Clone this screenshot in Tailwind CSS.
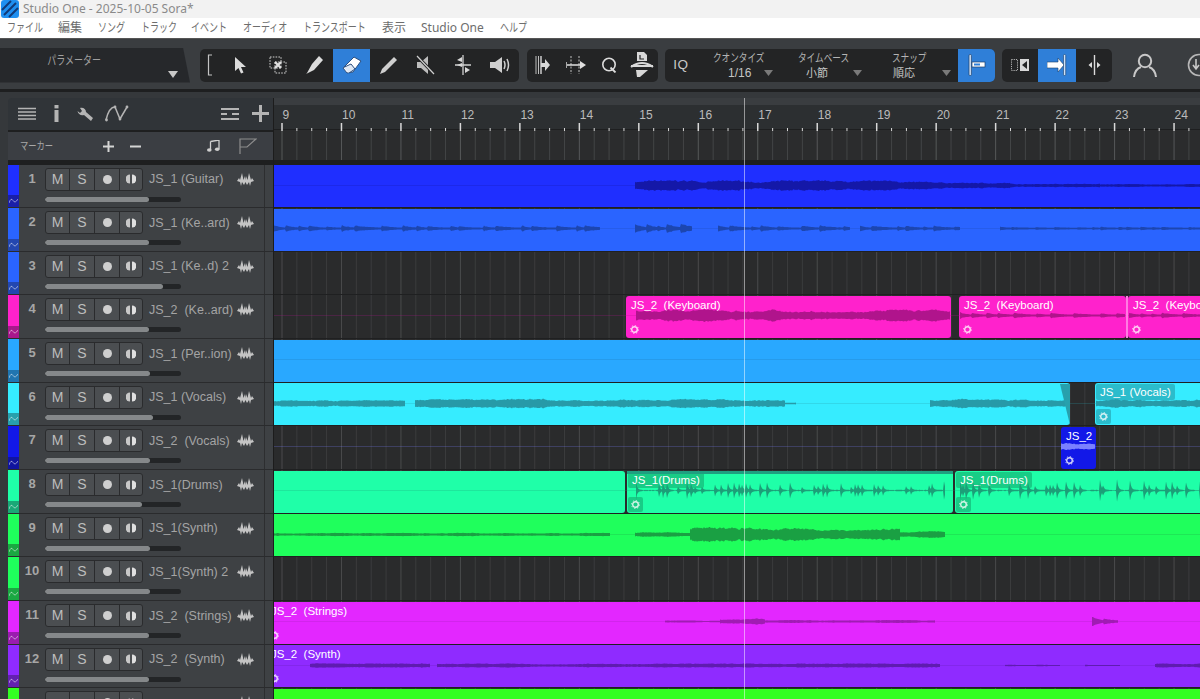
<!DOCTYPE html>
<html lang="ja">
<head>
<meta charset="UTF-8">
<title>Studio One - 2025-10-05 Sora*</title>
<script src="https://cdn.jsdelivr.net/npm/@tailwindcss/browser@4"></script>
</head>
<body class="w-[1200px] h-[699px] overflow-hidden bg-[#35383b] font-['Liberation_Sans','Noto_Sans_CJK_JP',sans-serif]">

<!-- title bar -->
<div class="h-[18px] bg-[#f2f2f2] flex items-center">
  <svg class="w-[18px] h-[18px] ml-[1px]" viewBox="0 0 18 18"><rect width="18" height="18" rx="3" fill="#1f8ff0"/><path d="M1 10L10 1M3 15L15 3M8 17L17 8" stroke="#123a78" stroke-width="2" fill="none"/></svg>
  <span class="ml-[4px] text-[12px] text-[#8a8a8a] font-['Noto_Sans',sans-serif] whitespace-nowrap">Studio One - 2025-10-05 Sora*</span>
</div>

<!-- menu -->
<div class="h-[21px] bg-white flex items-center pl-[7px] text-[12px] text-[#6d6d6d] font-['Noto_Sans','Noto_Sans_CJK_JP',sans-serif] whitespace-nowrap border-b border-[#555]">
  <span class="w-[51px]"><span class="block origin-left scale-x-75">ファイル</span></span>
  <span class="w-[40px]">編集</span>
  <span class="w-[43px]"><span class="block origin-left scale-x-75">ソング</span></span>
  <span class="w-[50px]"><span class="block origin-left scale-x-75">トラック</span></span>
  <span class="w-[52px]"><span class="block origin-left scale-x-75">イベント</span></span>
  <span class="w-[60px]"><span class="block origin-left scale-x-75">オーディオ</span></span>
  <span class="w-[79px]"><span class="block origin-left scale-x-75">トランスポート</span></span>
  <span class="w-[39px]">表示</span>
  <span class="w-[79px]">Studio One</span>
  <span class="w-[40px]"><span class="block origin-left scale-x-75">ヘルプ</span></span>
</div>

<!-- toolbar -->
<div class="h-[50px] bg-[#3a3d40] flex items-center pt-[2px] text-[#b4b4b4] whitespace-nowrap overflow-hidden">
  <div class="relative shrink-0 w-[190px] h-[35px] bg-[#26282b] [clip-path:polygon(0_0,183px_0,190px_100%,0_100%)]">
    <span class="block pl-[47px] pt-[4px] text-[12px] origin-left scale-x-75 text-[#a0a0a0] ml-[12px]">パラメーター</span>
    <svg class="absolute left-[168px] top-[23px] w-[10px] h-[7px]" viewBox="0 0 10 7"><path d="M0 0H10L5 7Z" fill="#c8c8c8"/></svg>
  </div>

  <div class="ml-[10px] shrink-0 w-[319px] h-[33px] bg-[#232425] rounded-[5px] flex">
    <div class="w-[22px] flex items-center pl-[7px]"><svg width="6" height="22" viewBox="0 0 6 22"><path d="M5 1H1.5V21H5" stroke="#c4c4c4" stroke-width="1.2" fill="none"/></svg></div>
    <div class="w-[37px] flex items-center justify-center"><svg width="13" height="17" viewBox="0 0 13 17"><path d="M1 0V14L4.5 11L7 16.5L9.5 15.5L7 10H12Z" fill="#dcdcdc"/></svg></div>
    <div class="w-[37px] flex items-center justify-center"><svg width="18" height="18" viewBox="0 0 18 18"><path d="M1 1H12V12H1ZM6 6H17V17H6Z" fill="none" stroke="#d0d0d0" stroke-dasharray="1.6 1.2"/><path d="M6 6L12 12M12 6L6 12" stroke="#e0e0e0" stroke-width="2.4"/></svg></div>
    <div class="w-[37px] flex items-center justify-center"><svg width="17" height="18" viewBox="0 0 17 18"><path d="M13 0L17 4L8 14L0 18L1 17L6 8Z" fill="#dcdcdc"/></svg></div>
    <div class="w-[37px] flex items-center justify-center bg-[#2f7fd8]"><svg width="20" height="18" viewBox="0 0 20 18"><path d="M12 1L19 5L11 16L5 17L1 12Z" fill="#fff" stroke="#2b4f80"/><path d="M1.5 11.5L9 8L13 13L7 17" fill="#dfe8f4" stroke="#2b4f80"/></svg></div>
    <div class="w-[37px] flex items-center justify-center"><svg width="18" height="18" viewBox="0 0 18 18"><path d="M14 1L17 4L5 16L0 18L2 13Z" fill="#cfcfcf"/></svg></div>
    <div class="w-[37px] flex items-center justify-center"><svg width="19" height="20" viewBox="0 0 19 20"><path d="M1 7H5L12 1V19L5 13H1Z" fill="#bdbdbd"/><path d="M1 1L18 19" stroke="#232425" stroke-width="3"/><path d="M1 1L18 19" stroke="#d0d0d0" stroke-width="1.2"/></svg></div>
    <div class="w-[37px] flex items-center justify-center"><svg width="18" height="20" viewBox="0 0 18 20"><path d="M9 0V20M1 10H17" stroke="#d0d0d0" stroke-width="1.3"/><path d="M8 2L3 5L8 7ZM8 8L3 10L8 12Z" fill="#d8d8d8"/><path d="M11 12V18L16 15Z" fill="#d8d8d8"/></svg></div>
    <div class="w-[37px] flex items-center justify-center"><svg width="20" height="18" viewBox="0 0 20 18"><path d="M0 6H5L12 1V17L5 12H0Z" fill="#d0d0d0"/><path d="M14 5Q16 9 14 13M17 3Q20 9 17 15" stroke="#d0d0d0" stroke-width="1.5" fill="none"/></svg></div>
  </div>

  <div class="ml-[8px] shrink-0 w-[131px] h-[33px] bg-[#232425] rounded-[5px] flex">
    <div class="w-[33px] flex items-center justify-center"><svg width="16" height="20" viewBox="0 0 16 20"><path d="M1 1V19M3.5 1V19" stroke="#bdbdbd"/><path d="M6 1V19" stroke="#d8d8d8" stroke-width="1.4"/><path d="M6 8H10V4L15 10L10 16V12H6Z" fill="#d8d8d8"/></svg></div>
    <div class="w-[33px] flex items-center justify-center"><svg width="20" height="18" viewBox="0 0 20 18"><path d="M5 0V18M13 0V18" stroke="#c0c0c0" stroke-dasharray="2 1.5"/><path d="M0 6V12M1 9H17" stroke="#e0e0e0" stroke-width="1.4"/><path d="M14 5L20 9L14 13Z" fill="#e0e0e0"/></svg></div>
    <div class="w-[33px] flex items-center justify-center"><svg width="16" height="16" viewBox="0 0 16 16"><circle cx="8" cy="7.5" r="6.2" stroke="#dcdcdc" stroke-width="1.6" fill="none"/><path d="M9.5 10.5L14.5 15.5" stroke="#dcdcdc" stroke-width="1.8"/></svg></div>
    <div class="w-[33px] flex items-center justify-center"><svg width="24" height="26" viewBox="0 0 24 26"><path d="M7 0H14L17 3V9H7Z" fill="#d8d8d8"/><path d="M10 3V7H14" stroke="#232425" stroke-width="1.2" fill="none"/><path d="M1 15Q12 7 23 15" stroke="#d8d8d8" stroke-width="2" fill="none"/><path d="M1 13H23V15H1Z" fill="#d8d8d8"/><path d="M6 18H18L10 25H7Z" fill="#d8d8d8"/></svg></div>
  </div>

  <div class="ml-[7px] shrink-0 w-[330px] h-[33px] bg-[#232425] rounded-[5px] flex">
    <div class="w-[32px] flex items-center justify-center text-[13.5px] tracking-[0.5px] text-[#c8c8c8]">IQ</div>
    <div class="w-[85px] pt-[2px] text-[11.5px] leading-[15px]">
      <div class="ml-[16px] origin-left scale-x-75">クオンタイズ</div>
      <div class="flex items-center ml-[31px] text-[#c4c4c4] text-[12px]">1/16<svg class="ml-[13px]" width="9" height="6" viewBox="0 0 9 6"><path d="M0 0H9L4.5 6Z" fill="#7a7a7a"/></svg></div>
    </div>
    <div class="w-[90px] pt-[2px] text-[11.5px] leading-[15px]">
      <div class="ml-[16px] origin-left scale-x-75">タイムベース</div>
      <div class="flex items-center ml-[24px] text-[#c4c4c4] text-[11px]">小節<svg class="ml-[25px]" width="9" height="6" viewBox="0 0 9 6"><path d="M0 0H9L4.5 6Z" fill="#7a7a7a"/></svg></div>
    </div>
    <div class="w-[86px] pt-[2px] text-[11.5px] leading-[15px]">
      <div class="ml-[20px] origin-left scale-x-75">スナップ</div>
      <div class="flex items-center ml-[21px] text-[#c4c4c4] text-[11px]">順応<svg class="ml-[27px]" width="9" height="6" viewBox="0 0 9 6"><path d="M0 0H9L4.5 6Z" fill="#7a7a7a"/></svg></div>
    </div>
    <div class="w-[37px] flex items-center justify-center bg-[#2f7fd8] rounded-r-[5px]"><svg width="18" height="22" viewBox="0 0 18 22"><rect x="1" y="0.5" width="2.4" height="21" rx="1" fill="#cfe2f7" stroke="#1d3f6a" stroke-width="0.7"/><rect x="4" y="8" width="13" height="5" fill="#fff" stroke="#1d3f6a" stroke-width="0.7"/><rect x="6" y="9.5" width="6" height="2" fill="#2f7fd8"/></svg></div>
  </div>

  <div class="ml-[7px] shrink-0 w-[110px] h-[33px] bg-[#232425] rounded-[5px] flex">
    <div class="w-[36px] flex items-center justify-center"><svg width="18" height="12" viewBox="0 0 18 12"><rect x="0.5" y="0.5" width="6" height="11" fill="none" stroke="#b0b0b0" stroke-dasharray="1.2 1"/><rect x="9" y="0" width="9" height="12" fill="#d8d8d8"/><path d="M16 2V10L11 6Z" fill="#232425"/></svg></div>
    <div class="w-[38px] flex items-center justify-center bg-[#2f7fd8]"><svg width="20" height="22" viewBox="0 0 20 22"><path d="M0 8H11V4L17 11L11 18V14H0Z" fill="#fff" stroke="#1d3f6a" stroke-width="0.6"/><rect x="16.5" y="0.5" width="2.2" height="21" rx="1" fill="#cfe2f7" stroke="#1d3f6a" stroke-width="0.6"/></svg></div>
    <div class="w-[36px] flex items-center justify-center"><svg width="13" height="20" viewBox="0 0 13 20"><path d="M6.5 0V20" stroke="#dcdcdc" stroke-width="1.4"/><path d="M4 7V13L0.5 10ZM9 7V13L12.5 10Z" fill="#dcdcdc"/></svg></div>
  </div>

  <svg class="ml-[21px] shrink-0" width="24" height="24" viewBox="0 0 24 24"><circle cx="12" cy="8" r="6.2" stroke="#c8c8c8" stroke-width="2" fill="none"/><path d="M1 24Q2 16 8 14M23 24Q22 16 16 14" stroke="#c8c8c8" stroke-width="2" fill="none"/></svg>
  <svg class="ml-[30px] shrink-0" width="24" height="24" viewBox="0 0 24 24"><circle cx="12" cy="12" r="10.5" stroke="#b8b8b8" stroke-width="1.6" fill="none"/><path d="M9 6V15M6 12L9 16L12 12M15 8V17" stroke="#c8c8c8" stroke-width="1.6" fill="none"/></svg>
</div>

<!-- gap under the toolbar -->
<div class="h-[3px] bg-[#1e1f20]"></div>
<div class="h-[5.5px] bg-[#35383b]"></div>

<!-- main -->
<div class="flex h-[601.5px]">
  <div class="w-[8px] shrink-0"></div>

  <!-- track column -->
  <div class="w-[266px] shrink-0 border-r border-[#1c1c1c]">
    <div class="h-[34.5px] bg-[#303438] border-b-2 border-[#1e1f20] rounded-tl-[4px] flex items-center pl-[10px]">
      <svg width="18" height="14" viewBox="0 0 18 14"><path d="M0 1.5H18M0 5H18M0 8.5H18M0 12H18" stroke="#b4b4b4" stroke-width="1.6"/></svg>
      <svg class="ml-[18px]" width="5" height="17" viewBox="0 0 5 17"><rect x="0.5" y="0" width="4" height="3.4" fill="#b4b4b4"/><rect x="0.5" y="5" width="4" height="12" fill="#b4b4b4"/></svg>
      <svg class="ml-[18px]" width="17" height="14" viewBox="0 0 17 14"><path d="M0.5 4L3 6L5 4L3 1C6 0 9 2 9 5L16 11L14 14L7 8C4 9 1 7 0.5 4Z" fill="#b4b4b4"/></svg>
      <svg class="ml-[11px]" width="24" height="17" viewBox="0 0 24 17"><path d="M1 15Q4 2 10 2L15 14L22 2" stroke="#b4b4b4" stroke-width="1.5" fill="none"/><circle cx="1.5" cy="15" r="1.4" fill="#b4b4b4"/><circle cx="10" cy="2" r="1.4" fill="#b4b4b4"/><circle cx="15" cy="14" r="1.4" fill="#b4b4b4"/><circle cx="22" cy="2" r="1.4" fill="#b4b4b4"/></svg>
      <svg class="ml-[92px]" width="18" height="14" viewBox="0 0 18 14"><path d="M0 2H18M0 7H6M11 7H18M0 12H18" stroke="#b4b4b4" stroke-width="2.2"/></svg>
      <svg class="ml-[13px]" width="17" height="17" viewBox="0 0 17 17"><path d="M8.5 0V17M0 8.5H17" stroke="#b4b4b4" stroke-width="3"/></svg>
    </div>
    <div class="h-[29px] bg-[#3b3e43] border-b border-[#1e1f20] flex items-center pl-[12px] text-[11px] text-[#a8a8a8]">
      <span class="w-[83px] shrink-0 origin-left scale-x-75">マーカー</span>
      <svg class="shrink-0" width="11" height="11" viewBox="0 0 11 11"><path d="M5.5 0V11M0 5.5H11" stroke="#d4d4d4" stroke-width="2"/></svg>
      <svg class="ml-[15.5px] shrink-0" width="11" height="3" viewBox="0 0 11 3"><path d="M0 1.5H11" stroke="#d4d4d4" stroke-width="2"/></svg>
      <svg class="ml-[66px] shrink-0" width="13" height="12" viewBox="0 0 13 12"><path d="M3.5 1.5L12 0V9M3.5 1.5V10" stroke="#cfcfcf" stroke-width="1.3" fill="none"/><ellipse cx="2.3" cy="10" rx="2.3" ry="1.8" fill="#cfcfcf"/><ellipse cx="10.2" cy="9.3" rx="2.3" ry="1.8" fill="#cfcfcf"/></svg>
      <svg class="ml-[19.5px] shrink-0" width="18" height="16" viewBox="0 0 18 16"><path d="M1 16V1H17L8 9H1" stroke="#8d8d8d" stroke-width="1.2" fill="none"/></svg>
    </div>
    <div class="h-[3.5px] bg-[#1e1f20]"></div>
    <div id="tracks"></div>
  </div>

  <!-- arrange view -->
  <div class="relative flex-1 overflow-hidden">
    <div class="h-[7.5px] bg-[#3a3d40]"></div>
    <div id="ruler" class="relative h-[25px] bg-[#2c2f31] border-b border-[#1e1f20]"></div>
    <div class="h-[31px] bg-[#2b2c2d] border-b border-[#1e1f20]"></div>
    <div class="h-[3.5px] bg-[#1e1f20]"></div>
    <svg id="grid" class="absolute left-0 top-[67px] w-[926px] h-[569px]"></svg>
    <div id="lanes" class="relative"></div>
    <div class="absolute left-[470px] top-0 bottom-0 w-px bg-white/50"></div>
  </div>
</div>

<script>
  // track list: name, strip colour, darker strip square, fader end
  const tracks = [
    ["JS_1 (Guitar)", "#1f2fff", "#1a1fa8", 149],
    ["JS_1 (Ke..ard)", "#2a64ff", "#2347b0", 149],
    ["JS_1 (Ke..d) 2", "#2a64ff", "#2347b0", 163],
    ["JS_2  (Ke..ard)", "#ff22cc", "#a8188c", 149],
    ["JS_1 (Per..ion)", "#29a8ff", "#2075b0", 150],
    ["JS_1 (Vocals)", "#36ecff", "#27a0ad", 153],
    ["JS_2  (Vocals)", "#1218e8", "#1014a0", 150],
    ["JS_1(Drums)", "#1fffa8", "#1aa877", 142],
    ["JS_1(Synth)", "#1fff5c", "#1aa842", 150],
    ["JS_1(Synth) 2", "#1fff5c", "#1aa842", 150],
    ["JS_2  (Strings)", "#e327ff", "#9a1cae", 149],
    ["JS_2  (Synth)", "#8f2bff", "#6320b0", 149],
    ["", "#33ff22", "#24a81a", 149]
  ];

  document.getElementById("tracks").innerHTML = tracks.map((t, i) => `
    <div class="relative flex h-[43.67px] bg-[#3e4144] border-b border-[#2a2b2d]">
      <div class="w-[11px] shrink-0 flex flex-col" style="background:${t[1]}">
        <div class="mt-auto h-[12px] flex items-center justify-center" style="background:${t[2]}"><svg width="9" height="6" viewBox="0 0 9 6"><path d="M0 5Q2 -1 4 2.5T9 1" stroke="#ffffff80" fill="none"/></svg></div>
      </div>
      <div class="w-[26px] shrink-0 pt-[6px] text-center text-[13px] leading-[16px] font-bold text-[#a6a6a6]">${i < 12 ? i + 1 : ""}</div>
      <div class="w-[219px] shrink-0 pt-[3px]">
        <div class="flex items-center">
          <div class="w-[98px] h-[23px] flex bg-[#4b4e51] border border-[#2a2b2d] rounded-[3px] text-[#bdbdbd] text-[14px] leading-[20px]">
            <div class="w-[24px] text-center border-r border-[#2a2b2d]">${i < 12 ? "M" : ""}</div>
            <div class="w-[25px] text-center border-r border-[#2a2b2d]">${i < 12 ? "S" : ""}</div>
            <div class="w-[25px] flex items-center justify-center border-r border-[#2a2b2d]"><div class="w-[9px] h-[9px] rounded-full bg-[#cfcfcf]"></div></div>
            <div class="flex-1 flex items-center justify-center"><svg width="10" height="10" viewBox="0 0 10 10"><path d="M4 0.5A4.5 4.5 0 0 0 4 9.5Z" fill="#c8c8c8"/><path d="M6 0.5A4.5 4.5 0 0 1 6 9.5Z" fill="#e0e0e0"/></svg></div>
          </div>
          <div class="ml-[6px] mt-[1px] w-[88px] text-[12.5px] text-[#a4a4a4] whitespace-pre">${t[0]}</div>
          <svg width="17" height="13" viewBox="0 0 17 13"><path d="M0 8L2 5L3 7L5 0L6.5 7L8 3L8.5 7L9 3L10.5 7L12 0L14 7L15 5L17 8L14 9L13 13L12 9L10 12L8.5 9L7 12L5 9L4 13L3 9Z" fill="#c4c4c4"/></svg>
        </div>
        <div class="mt-[6px] w-[136px] h-[5px] rounded-full bg-[#232527] overflow-hidden">
          <div class="h-full rounded-full bg-[#85888a]" style="width:${t[3] - 45}px"></div>
        </div>
      </div>
      <div class="w-px shrink-0 bg-[#2d2e30]"></div>
    </div>`).join("");

  // ruler and grid use the bar pitch of the timeline
  const barPitch = 59.47, firstBar = 8;
  let rulerHtml = "", gridSvg = "", tickSvg = "";
  for (let b = 0; b < 16; b++) {
    const bx = firstBar + b * barPitch;
    rulerHtml += `<span class="absolute top-[1px] text-[12px] text-[#bcbcbc]" style="left:${bx + 0.5}px">${b + 9}</span>`;
    for (let s = 0; s < 4; s++) {
      const x = bx + s * barPitch / 4;
      tickSvg += `<path d="M${x} ${s ? 23 : 18}V26" stroke="#d8d8d8" stroke-width="${s ? 1 : 1.5}"/>`;
      tickSvg += `<path d="M${x} 26V55" stroke="${s ? "#434546" : "#565859"}"/>`;
      gridSvg += `<path d="M${x} 0V569" stroke="${s ? "#3b3c3d" : "#4a4b4c"}"/>`;
    }
  }
  document.getElementById("ruler").innerHTML = rulerHtml + `<svg class="absolute left-0 top-0 w-[926px] h-[56px]">${tickSvg}</svg>`;
  document.getElementById("grid").innerHTML = `<rect width="926" height="569" fill="#2a2b2c"/>` + gridSvg;

  // seeded noise so every render draws the same waveforms
  let seed = 7;
  const rnd = () => (seed = (seed * 16807) % 2147483647) / 2147483647;

  function wave(x1, x2, amp, mode) {
    const top = [], bottom = [];
    let slow = 0.6, beat = x1, beatAmp = 1, lump = x1, lumpLen = 12, lumpAmp = 1;
    for (let x = x1; x <= x2; x++) {
      slow += (rnd() - 0.5) * 0.28;
      slow = Math.min(1, Math.max(0.25, slow));
      let v = amp * (0.4 + 0.6 * slow) * (0.8 + 0.2 * rnd());
      if (mode === "drum") {
        // a hit every few pixels, each with its own height
        if (x >= beat + 3 && rnd() < 0.16) { beat = x; beatAmp = 0.35 + 0.65 * rnd(); }
        const d = x - beat;
        v = 0.7 + amp * beatAmp * Math.exp(-d / 1.2) * (0.8 + 0.2 * rnd());
        if (d > 6 && rnd() < 0.4) v = 0.2;
      } else if (mode === "burst") {
        // soft lumps that fall back to a thin line
        if (x >= lump + lumpLen) { lump = x; lumpLen = 8 + Math.floor(rnd() * 20); lumpAmp = 0.5 + 0.5 * rnd(); }
        v = 0.6 + amp * lumpAmp * Math.exp(-(x - lump) / (lumpLen * 0.55)) * (0.7 + 0.3 * rnd());
      }
      top.push(`${x - 274},${(20.5 - v).toFixed(1)}`);
      bottom.unshift(`${x - 274},${(20.5 + v).toFixed(1)}`);
    }
    return `<polygon points="${top.concat(bottom).join(" ")}"/>`;
  }

  // lane data: clips [x1, x2, label, dark label], waves [x1, x2, amp, mode]
  const lanes = [
    { color: "#1f2fff", wave: "#1418a8", clips: [[260, 1210]],
      waves: [[635, 900, 5.5], [900, 950, 4], [950, 1010, 3], [1010, 1100, 2.5], [1100, 1200, 1.6]] },
    { color: "#2a64ff", wave: "#1c46b0", clips: [[260, 1210]],
      waves: [[274, 600, 3, "burst"], [635, 692, 5, "burst"], [718, 850, 3, "burst"], [860, 960, 2.5, "burst"], [1000, 1200, 1.6, "burst"]] },
    { clips: [], waves: [] },
    { color: "#ff22cc", wave: "#b0148c", clips: [[626, 951, "JS_2  (Keyboard)"], [959, 1126, "JS_2  (Keyboard)"], [1128, 1260, "JS_2  (Keyboard)"]],
      waves: [[636, 950, 6.5], [960, 1125, 3, "burst"], [1129, 1200, 2.5, "burst"]] },
    { color: "#29a8ff", wave: "#2075b0", clips: [[260, 1210]], waves: [] },
    { color: "#36ecff", wave: "#279aa8", clips: [[260, 1070], [1095, 1260, "JS_1 (Vocals)", true]],
      waves: [[274, 405, 3.5], [415, 785, 5], [785, 796, 1.2], [930, 1068, 5.5], [1096, 1200, 4.5]] },
    { color: "#1218e8", wave: "#7a80ff", clips: [[1061, 1096, "JS_2"]], waves: [[1061, 1095, 4]] },
    { color: "#1fffa8", wave: "#1c9f78", clips: [[260, 625], [627, 953, "JS_1(Drums)", true], [955, 1260, "JS_1(Drums)", true]],
      waves: [[636, 945, 9, "drum"], [960, 1200, 11, "drum"]] },
    { color: "#1fff5c", wave: "#1aa043", clips: [[260, 1210]],
      waves: [[274, 610, 1.8], [635, 690, 2.4], [690, 900, 7.5], [900, 945, 3.5]] },
    { clips: [], waves: [] },
    { color: "#e327ff", wave: "#a01cb3", clips: [[266, 1210, "JS_2  (Strings)"]],
      waves: [[665, 720, 1.2], [720, 765, 3.2], [765, 935, 1.6], [1092, 1118, 5, "burst"]] },
    { color: "#8f2bff", wave: "#5f1cb0", clips: [[266, 1210, "JS_2  (Synth)"]],
      waves: [[310, 430, 2.4], [437, 940, 2.2], [1005, 1060, 0.9], [1085, 1120, 0.9], [1155, 1200, 2.2]] },
    { color: "#33ff22", wave: "#24a81a", clips: [[260, 1210]], waves: [] }
  ];

  const gear = `<svg width="9" height="9" viewBox="0 0 9 9"><circle cx="4.5" cy="4.5" r="2.8" fill="none" stroke="#ffffffd0" stroke-width="1.4"/><circle cx="4.5" cy="4.5" r="4" fill="none" stroke="#ffffffb0" stroke-dasharray="1.4 1.7"/></svg>`;

  document.getElementById("lanes").innerHTML = lanes.map((lane) => {
    const clips = lane.clips.map(([x1, x2, label, dark]) => {
      const labelClass = dark ? "bg-black/20 rounded-[2px]" : "";
      const gearClass = dark ? "bg-black/20" : "";
      return `
        <div class="absolute top-[0.5px] bottom-0 rounded-[3px] overflow-hidden" style="left:${x1 - 274}px;width:${x2 - x1}px;background:${lane.color}">
          ${label ? `<div class="absolute left-[1px] top-[1px] px-[4px] text-[11.5px] leading-[16px] text-white whitespace-pre ${labelClass}">${label}</div>
          <div class="absolute left-[1px] bottom-[1px] w-[15px] h-[15px] rounded-[2px] flex items-center justify-center ${gearClass}">${gear}</div>` : ""}
        </div>`;
    }).join("");
    const midLine = lane.color ? `<path d="M0 20.5H926" stroke="${lane.wave}" stroke-opacity="0.25"/>` : "";
    const waves = lane.waves.map((w) => wave(w[0], w[1], w[2], w[3])).join("");
    return `
      <div class="relative h-[43.67px] border-b border-[#1f2021]">
        ${clips}
        <svg class="absolute left-0 top-0 w-[926px] h-[43px]" fill="${lane.wave || "none"}">${lane.clips.length ? midLine + waves : ""}</svg>
      </div>`;
  }).join("");

  // fade-out handle on the long vocal clip, and the selected edge of the drum clip
  const laneRows = document.getElementById("lanes").children;
  laneRows[5].insertAdjacentHTML("beforeend",
    `<svg class="absolute left-[786px] top-[1px] w-[10px] h-[41px]" viewBox="0 0 10 41"><path d="M0 0H10V41Z" fill="#27a0ad"/></svg>`);
  laneRows[7].insertAdjacentHTML("beforeend",
    `<div class="absolute left-[353px] top-[1px] w-[326px] h-[3px] bg-[#1f9f80]"></div>`);
  laneRows[3].insertAdjacentHTML("beforeend",
    `<div class="absolute left-[852px] top-[1px] bottom-0 w-[2px] bg-[#ff7be2]"></div>`);
</script>
</body>
</html>
